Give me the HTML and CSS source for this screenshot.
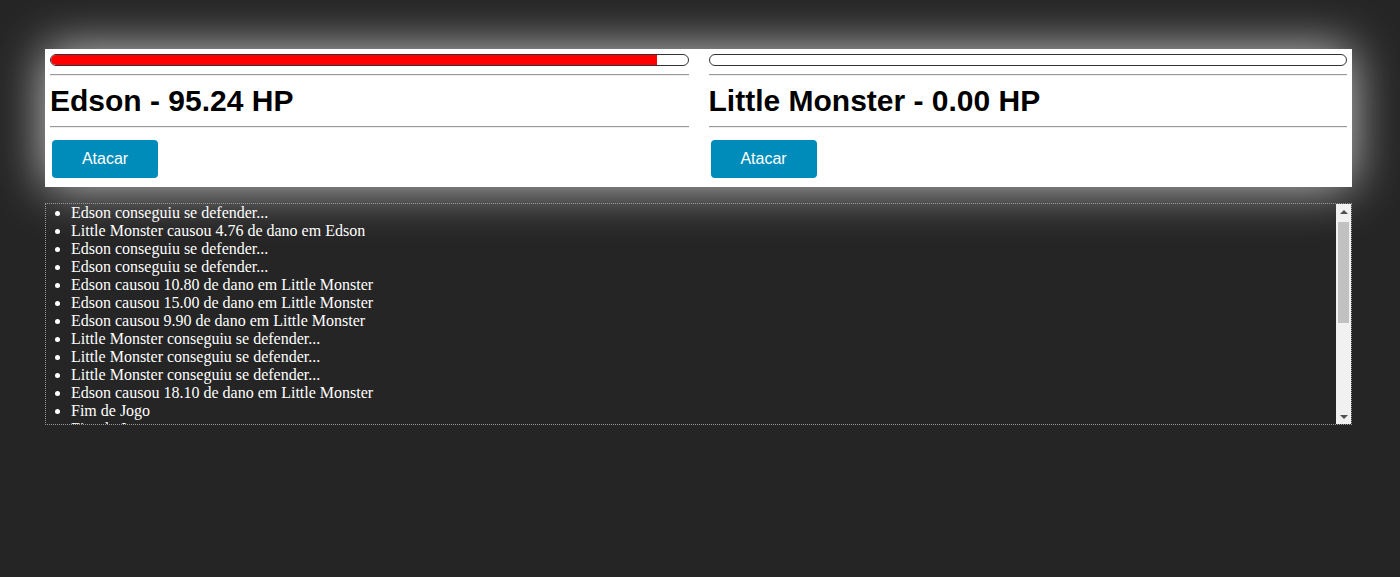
FILE: index.html
```html
<!DOCTYPE html>
<html lang="pt">
<head>
<meta charset="utf-8">
<title>Jogo</title>
<link rel="stylesheet" href="styles.css">
</head>
<body>
<div class="app">
  <div class="panel">
    <div class="player">
      <div class="bar"><div class="fill" style="width:95.24%"></div></div>
      <div class="rule"></div>
      <h1 class="name">Edson - 95.24 HP</h1>
      <div class="rule"></div>
      <div class="actions"><button class="btn">Atacar</button></div>
    </div>
    <div class="player">
      <div class="bar"><div class="fill" style="width:0%"></div></div>
      <div class="rule"></div>
      <h1 class="name">Little Monster - 0.00 HP</h1>
      <div class="rule"></div>
      <div class="actions"><button class="btn">Atacar</button></div>
    </div>
  </div>
  <div class="log">
    <div class="log-view">
      <ul class="log-list">
        <li>Edson conseguiu se defender...</li>
        <li>Little Monster causou 4.76 de dano em Edson</li>
        <li>Edson conseguiu se defender...</li>
        <li>Edson conseguiu se defender...</li>
        <li>Edson causou 10.80 de dano em Little Monster</li>
        <li>Edson causou 15.00 de dano em Little Monster</li>
        <li>Edson causou 9.90 de dano em Little Monster</li>
        <li>Little Monster conseguiu se defender...</li>
        <li>Little Monster conseguiu se defender...</li>
        <li>Little Monster conseguiu se defender...</li>
        <li>Edson causou 18.10 de dano em Little Monster</li>
        <li>Fim de Jogo</li>
        <li>Fim de Jogo</li>
      </ul>
    </div>
    <div class="sb">
      <div class="sb-btn"><span class="arrow-up"></span></div>
      <div class="sb-track"><div class="sb-thumb"></div></div>
      <div class="sb-btn"><span class="arrow-down"></span></div>
    </div>
  </div>
</div>
</body>
</html>
```
FILE: styles.css
```css
html, body {
  margin: 0;
  padding: 0;
  background: #252525;
}

body {
  font-family: "Liberation Sans", Arial, sans-serif;
}

.app {
  width: 1307px;
  padding: 49px 0 0 45px;
  display: flex;
  flex-direction: column;
  gap: 16px;
}

.panel {
  background: #ffffff;
  padding: 5px 5px 9px 5px;
  display: grid;
  grid-template-columns: 1fr 1fr;
  column-gap: 20px;
  box-shadow: 0 0 50px rgba(255, 255, 255, 0.75);
}

.player {
  display: flex;
  flex-direction: column;
}

.bar {
  height: 10px;
  border: 1px solid #333;
  border-radius: 6px;
  overflow: hidden;
  background: #fff;
}

.fill {
  height: 100%;
  background: #ff0000;
}

.rule {
  border-top: 1px solid #9a9a9a;
  border-bottom: 1px solid #eeeeee;
  margin: 8px 0;
}

.name {
  margin: 0;
  font-size: 30px;
  line-height: 34px;
  font-weight: bold;
  color: #000;
}

.actions {
  padding: 4px 2px 0;
}

.btn {
  width: 106px;
  height: 38px;
  background: #008cba;
  color: #fff;
  border: none;
  border-radius: 4px;
  font-family: "Liberation Sans", Arial, sans-serif;
  font-size: 16px;
  cursor: pointer;
}

.log {
  height: 220px;
  border: 1px dotted #999;
  display: flex;
  color: #fff;
  font-family: "Liberation Serif", "Times New Roman", serif;
  font-size: 16px;
  line-height: 18px;
}

.log-view {
  flex: 1;
  overflow: hidden;
}

.log-list {
  margin: 0;
  padding-left: 25px;
}

.sb {
  width: 15px;
  background: #f1f1f1;
  display: flex;
  flex-direction: column;
}

.sb-btn {
  height: 15px;
  display: flex;
  align-items: center;
  justify-content: center;
}

.arrow-up {
  width: 0;
  height: 0;
  border-left: 4px solid transparent;
  border-right: 4px solid transparent;
  border-bottom: 4px solid #505050;
}

.arrow-down {
  width: 0;
  height: 0;
  border-left: 4px solid transparent;
  border-right: 4px solid transparent;
  border-top: 4px solid #505050;
}

.sb-track {
  flex: 1;
  padding: 3px 2px 0;
}

.sb-thumb {
  height: 101px;
  background: #c1c1c1;
}
```
